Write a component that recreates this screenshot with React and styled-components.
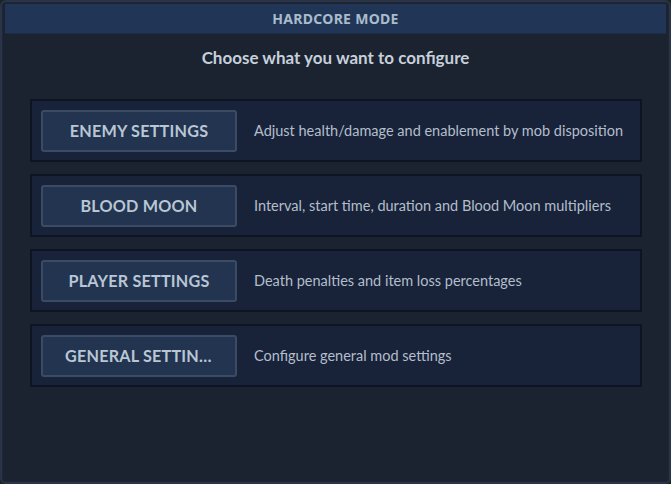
import React from "react";
import styled, { createGlobalStyle } from "styled-components";

const Global = createGlobalStyle`
  html, body { margin: 0; padding: 0; background: #17261f; }
  body { width: 671px; height: 484px; overflow: hidden; }
  * { box-sizing: border-box; }
`;

const Window = styled.div`
  width: 671px;
  height: 484px;
  background: #1b2230;
  border: 2px solid #2a3449;
  border-radius: 6px;
  box-shadow: inset 0 0 0 1px #1e2638;
  padding: 2px 3px;
  display: flex;
  flex-direction: column;
  font-family: Lato, "Noto Sans", sans-serif;
`;

const Header = styled.div`
  height: 30px;
  background: #213656;
  border-bottom: 1px solid #1a2c47;
  display: flex;
  align-items: center;
  justify-content: center;
  color: #a9bccb;
  font-family: "Noto Sans", Lato, sans-serif;
  font-weight: 700;
  font-size: 14px;
  letter-spacing: 0.3px;
`;

const Title = styled.div`
  margin-top: 14px;
  text-align: center;
  color: #c6d0db;
  font-weight: 700;
  font-size: 17px;
  line-height: 20px;
`;

const List = styled.div`
  margin: 31px 24px 0 25px;
  display: flex;
  flex-direction: column;
  gap: 12px;
`;

const Row = styled.div`
  height: 63px;
  background: #18233a;
  border: 2px solid #0d1424;
  padding: 9px 9px;
  display: flex;
  align-items: center;
  gap: 17px;
`;

const Button = styled.button`
  width: 196px;
  height: 42px;
  flex: none;
  background: #223450;
  border: 2px solid #3b4b66;
  border-radius: 3px;
  color: #b9c6d4;
  font-family: Lato, "Noto Sans", sans-serif;
  font-weight: 700;
  font-size: 16.2px;
  letter-spacing: 0.2px;
  padding: 0 22px;
  white-space: nowrap;
  overflow: hidden;
  text-overflow: ellipsis;
  cursor: pointer;
`;

const Desc = styled.div`
  color: #b3beca;
  font-size: 14.5px;
  white-space: nowrap;
`;

const items = [
  ["ENEMY SETTINGS", "Adjust health/damage and enablement by mob disposition"],
  ["BLOOD MOON", "Interval, start time, duration and Blood Moon multipliers"],
  ["PLAYER SETTINGS", "Death penalties and item loss percentages"],
  ["GENERAL SETTINGS", "Configure general mod settings"],
];

export default function App() {
  return (
    <>
      <Global />
      <Window>
        <Header>HARDCORE MODE</Header>
        <Title>Choose what you want to configure</Title>
        <List>
          {items.map(([label, desc]) => (
            <Row key={label}>
              <Button>{label}</Button>
              <Desc>{desc}</Desc>
            </Row>
          ))}
        </List>
      </Window>
    </>
  );
}
